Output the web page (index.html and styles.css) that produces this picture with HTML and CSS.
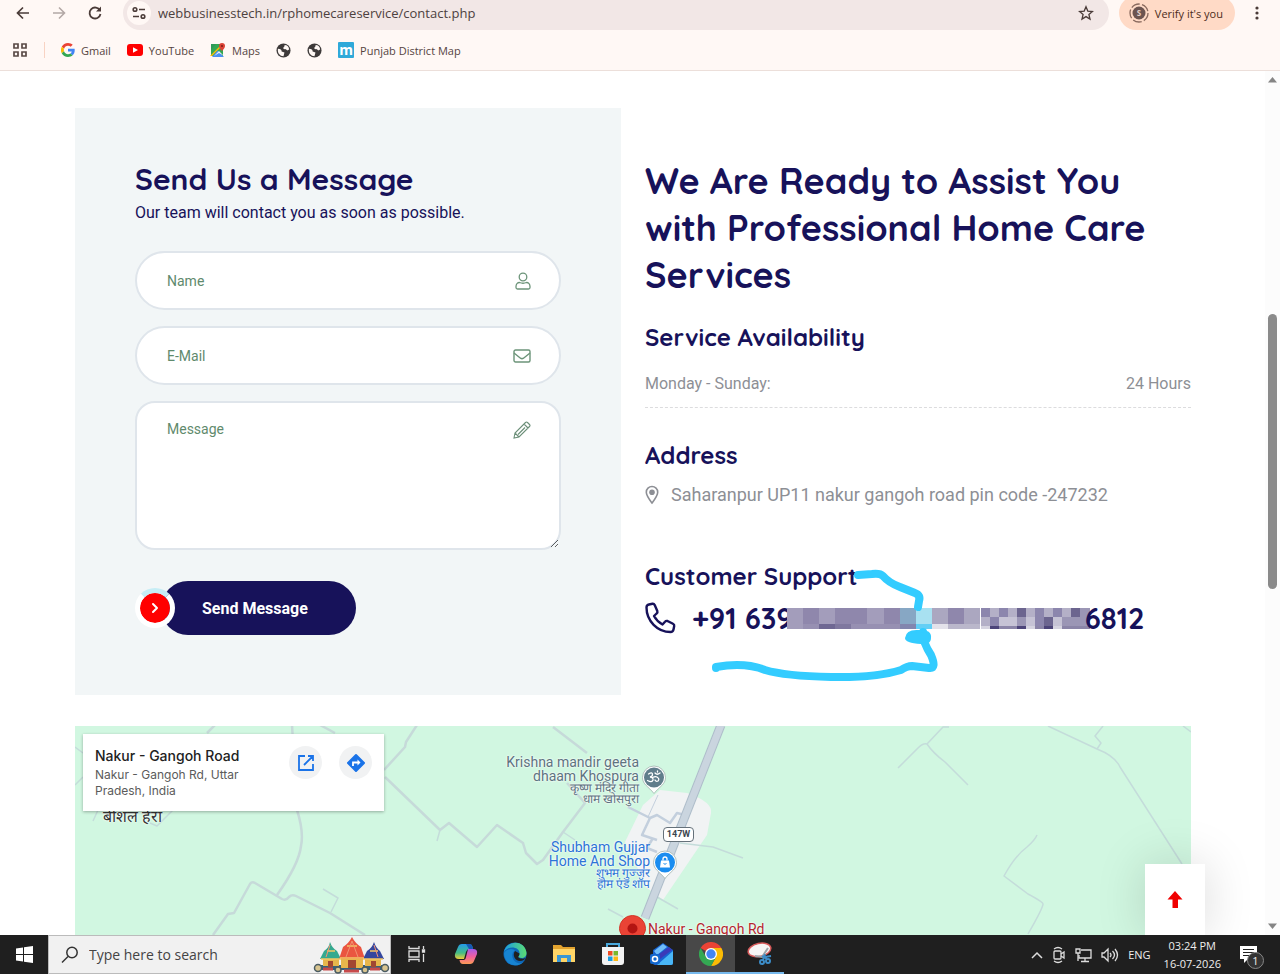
FILE: index.html
```html
<!DOCTYPE html>
<html lang="en">
<head>
  <meta charset="UTF-8" />
  <meta name="viewport" content="width=device-width, initial-scale=1" />
  <title>Contact</title>
  <link rel="stylesheet" href="styles.css">
</head>
<body>

<header class="browser">
  <div class="toolbar">
    <button class="tool" aria-label="Back"><svg width="16" height="16" viewBox="0 0 16 16"><path d="M14 8H3M8 2.500L2.500 8 8 13.500" fill="none" stroke="#4a3b38" stroke-width="1.700"/></svg></button>
    <button class="tool" aria-label="Forward"><svg width="16" height="16" viewBox="0 0 16 16"><path d="M2 8h11M8 2.500L13.500 8 8 13.500" fill="none" stroke="#b3a8a5" stroke-width="1.600"/></svg></button>
    <button class="tool" aria-label="Reload"><svg width="16" height="16" viewBox="0 0 16 16"><path d="M13 5.500A5.500 5.500 0 1 0 13.500 9" fill="none" stroke="#4a3b38" stroke-width="1.800"/><path d="M14 1.500v5H9z" fill="#4a3b38"/></svg></button>
    <div class="omnibox">
      <button class="site-info" aria-label="Site information"><svg width="16" height="16" viewBox="0 0 16 16" fill="none" stroke="#4a3b38" stroke-width="1.600"><circle cx="4" cy="4.500" r="1.800"/><path d="M8 4.500h6M2 11.500h6"/><circle cx="12" cy="11.500" r="1.800"/></svg></button>
      <input class="url" type="text" aria-label="Address bar" value="webbusinesstech.in/rphomecareservice/contact.php">
      <button class="tool star" aria-label="Bookmark"><svg width="16" height="16" viewBox="0 0 16 16"><path d="M8 1.800l1.800 4.300 4.600.4-3.500 3 1.100 4.600L8 11.600l-4 2.500 1.100-4.600-3.500-3 4.600-.4z" fill="none" stroke="#4a3b38" stroke-width="1.300"/></svg></button>
    </div>
    <button class="verify"><svg width="20" height="20" viewBox="0 0 20 20"><circle cx="10" cy="10" r="9" fill="none" stroke="#8a6a5e" stroke-width="1.300" stroke-dasharray="9 2.300"/><circle cx="10" cy="10" r="6.500" fill="#6c5450"/><text x="10" y="13" text-anchor="middle" class="avatar-letter">S</text></svg>Verify it's you</button>
    <button class="tool menu" aria-label="Menu"><svg width="16" height="16" viewBox="0 0 16 16" fill="#4a3b38"><circle cx="8" cy="3" r="1.600"/><circle cx="8" cy="8" r="1.600"/><circle cx="8" cy="13" r="1.600"/></svg></button>
  </div>
  <nav class="bookmarks">
    <button class="tool" aria-label="Apps"><svg width="16" height="16" viewBox="0 0 16 16" fill="none" stroke="#5a4a46" stroke-width="1.700"><path d="M2 2h4v4H2zM10 2h4v4h-4zM2 10h4v4H2zM10 10h4v4h-4z"/></svg></button>
    <span class="divider"></span>
    <a href="#"><svg width="14" height="14" viewBox="0 0 48 48"><path fill="#ea4335" d="M24 9.500c3.500 0 6.700 1.200 9.200 3.600l6.900-6.900C35.900 2.400 30.500 0 24 0 14.600 0 6.500 5.400 2.600 13.200l8 6.200C12.400 13.700 17.700 9.500 24 9.500z"/><path fill="#4285f4" d="M47 24.600c0-1.600-.2-3.100-.4-4.600H24v9h12.900c-.6 3-2.200 5.500-4.700 7.200l7.700 6C44.400 38 47 31.800 47 24.600z"/><path fill="#fbbc05" d="M10.500 28.600a14.500 14.500 0 0 1 0-9.200l-8-6.200a24 24 0 0 0 0 21.600z"/><path fill="#34a853" d="M24 48c6.500 0 11.900-2.100 15.900-5.800l-7.700-6c-2.200 1.500-4.900 2.300-8.200 2.300-6.300 0-11.600-4.200-13.500-9.900l-8 6.200C6.500 42.600 14.600 48 24 48z"/></svg>Gmail</a>
    <a href="#"><svg width="16" height="12" viewBox="0 0 16 12"><rect width="16" height="12" rx="3" fill="#f00"/><path d="M6 3.200v5.600L11 6z" fill="#fff"/></svg>YouTube</a>
    <a href="#"><svg width="16" height="16" viewBox="0 0 16 16"><path d="M1 2h12v12H1z" fill="#34a853"/><path d="M1 2h5L1 8z" fill="#2f9a58"/><path d="M13 3L2 14H0l12-12z" fill="#fbbc05"/><path d="M7.500 8.500L14 15H2z" fill="#4a90f0"/><path d="M4 14l5-5 5 5-5-3z" fill="#e6eefb"/><path d="M12 1a3 3 0 0 1 3 3c0 2-3 5-3 5S9 6 9 4a3 3 0 0 1 3-3z" fill="#db4437"/><circle cx="12" cy="4" r="1" fill="#7b1d16"/></svg>Maps</a>
    <a href="#" aria-label="Bookmark"><svg width="15" height="15" viewBox="0 0 16 16"><circle cx="8" cy="8" r="7.500" fill="#3e3a3a"/><path d="M2 6c3 0 4 1 4 3l3 1-1 4c-4 0-6-3-6-6zM9 2c1 2-2 2-1 4 2 1 3 0 4 2l2-1C14 4 12 2 9 2z" fill="#fff8f5"/></svg></a>
    <a href="#" aria-label="Bookmark"><svg width="15" height="15" viewBox="0 0 16 16"><circle cx="8" cy="8" r="7.500" fill="#3e3a3a"/><path d="M2 6c3 0 4 1 4 3l3 1-1 4c-4 0-6-3-6-6zM9 2c1 2-2 2-1 4 2 1 3 0 4 2l2-1C14 4 12 2 9 2z" fill="#fff8f5"/></svg></a>
    <a href="#"><span class="m-logo">m</span>Punjab District Map</a>
  </nav>
</header>

<div class="viewport">
  <main class="page">
    <div class="container">
      <div class="contact">
        <form class="message-form" autocomplete="off">
          <h2>Send Us a Message</h2>
          <p class="lead">Our team will contact you as soon as possible.</p>

          <div class="field">
            <input type="text" name="name" placeholder="Name" aria-label="Name">
            <svg class="field-icon" width="16" height="18" viewBox="0 0 16 18" fill="none" stroke="#6c9479" stroke-width="1.300"><circle cx="8" cy="5" r="3.800"/><path d="M4.500 10.500C2.500 10.500 1 12.500 1 14.500V15.500Q1 17 2.500 17H13.500Q15 17 15 15.500V14.500C15 12.500 13.500 10.500 11.500 10.500Q8 12 4.500 10.500z"/></svg>
          </div>
          <div class="field">
            <input type="email" name="email" placeholder="E-Mail" aria-label="E-Mail">
            <svg class="field-icon" width="18" height="14" viewBox="0 0 18 14" fill="none" stroke="#6c9479" stroke-width="1.400"><rect x="1" y="1" width="16" height="12" rx="1.500"/><path d="M1 4l6.500 5.200Q9 10.200 10.500 9.200L17 4"/></svg>
          </div>
          <div class="field">
            <textarea name="message" placeholder="Message" aria-label="Message"></textarea>
            <svg class="field-icon top" width="18" height="18" viewBox="0 0 18 18" fill="none" stroke="#6c8f79" stroke-width="1.100"><path d="M1 17l1-5L12.500 1.500Q13.500.5 14.500 1.500L16.500 3.500Q17.500 4.500 16.500 5.500L6 16zM11 3l4 4M2 12l4 4M12 6.500L5 13.500"/></svg>
          </div>

          <button type="submit" class="send">
            <span class="send-icon"><svg width="10" height="12" viewBox="0 0 10 12"><path d="M3 2l4 4-4 4" fill="none" stroke="#fff" stroke-width="2" stroke-linecap="round" stroke-linejoin="round"/></svg></span>
            Send Message
          </button>
        </form>

        <section class="info">
          <h1>We Are Ready to Assist You with Professional Home Care Services</h1>

          <h3>Service Availability</h3>
          <ul class="hours">
            <li><span>Monday - Sunday:</span><span>24 Hours</span></li>
          </ul>

          <h3>Address</h3>
          <p class="address">
            <svg width="14" height="20" viewBox="0 0 14 20"><path d="M7 1.500A5.700 5.700 0 0 1 12.700 7.200C12.700 10.500 10 14 7 18 4 14 1.300 10.500 1.300 7.200A5.700 5.700 0 0 1 7 1.500z" fill="none" stroke="#8d8f95" stroke-width="1.600"/><circle cx="7" cy="7.300" r="2.800" fill="#8d8f95"/></svg>
            Saharanpur UP11 nakur gangoh road pin code -247232
          </p>

          <div class="support">
            <h3>Customer Support</h3>
            <p class="phone">
              <svg width="32" height="32" viewBox="0 0 32 32" fill="none" stroke="#17125a" stroke-width="2.400" stroke-linejoin="round"><path d="M1.500 5.500Q1.500 3 4 2.500L7.500 1.800Q9 1.600 9.700 3L12.300 9Q12.800 10.500 11.600 11.500L9 14Q12 19.500 17.500 22.500L20 19.700Q21 18.500 22.500 19L28 21.800Q29.500 22.500 29.200 24L28.500 27.500Q28 30 25.500 30C12.500 30 1.500 19 1.500 5.500z"/></svg>
              <span>+91 639</span>
              <svg class="mosaic" width="303" height="21" viewBox="0 0 303 21" shape-rendering="crispEdges">
                <path fill="#a39dbb" d="M0 0h16v21H0zM32 0h16v16H32zM80 0h17v16H80z"/>
                <path fill="#8f87ac" d="M16 0h16v16H16zM48 0h32v16H48zM97 0h16v16H97zM161 0h16v16h-16z"/>
                <path fill="#9790b2" d="M16 16h16v5H16zM64 16h49v5H64z"/>
                <path fill="#6f6893" d="M32 16h16v5H32z"/>
                <path fill="#7f789f" d="M48 16h16v5H48z"/>
                <path fill="#87a7c4" d="M113 0h16v16h-16z"/>
                <path fill="#8286ae" d="M113 16h16v5h-16z"/>
                <path fill="#a8e1f1" d="M129 0h16v16h-16z"/>
                <path fill="#63cff5" d="M129 16h16v5h-16z"/>
                <path fill="#aba7c0" d="M145 0h16v16h-16zM177 0h16v16h-16z"/>
                <path fill="#e3e2ea" d="M145 16h16v5h-16z"/>
                <path fill="#bab7cb" d="M161 16h16v5h-16zM177 16h16v5h-16z"/>
                <path fill="#8c86ad" d="M194 0h9v9h-9zM212 0h9v9h-9zM248 0h9v18h-9zM266 0h9v9h-9zM203 9h9v9h-9z"/>
                <path fill="#b4b0c7" d="M203 0h9v9h-9zM221 0h9v9h-9zM239 0h9v9h-9zM257 0h9v9h-9zM275 0h9v9h-9zM194 9h9v9h-9z"/>
                <path fill="#6c658f" d="M230 0h9v9h-9zM284 0h9v9h-9zM257 9h9v9h-9z"/>
                <path fill="#c6c3d5" d="M212 9h18v9h-18zM239 9h9v9h-9zM266 9h9v9h-9z"/>
                <path fill="#9b96b5" d="M230 9h9v9h-9zM275 9h28v9h-28zM293 0h10v9h-10z"/>
                <path fill="#4c4479" d="M203 18h9v3h-9zM230 18h9v3h-9zM257 18h9v3h-9z"/>
                <path fill="#8b85a8" d="M212 18h18v3h-18zM248 18h9v3h-9zM275 18h28v3h-28z"/>
                <path fill="#d6d4e0" d="M194 18h9v3h-9zM239 18h9v3h-9zM266 18h9v3h-9z"/>
              </svg>
              <span>6812</span>
            </p>
            <!-- hand-drawn marker line -->
            <svg class="marker" width="300" height="120" viewBox="0 0 300 120" fill="none" stroke="#33ccff" stroke-width="8" stroke-linecap="round" stroke-linejoin="round">
              <path d="M213 14L227 13Q235 12 238 15Q244 22 255 26L270 32Q276 34 274 40L273 46"/>
              <path d="M278 71Q277 80 286 94Q292 108 284 107L267 105Q262 105 256 109Q230 117 186 116Q140 115 120 109Q100 101 71 106L71 107"/>
              <path d="M261 77q1-8 13-7 12-1 11 7 0 6-9 5-15-1-15-5z" fill="#33ccff" stroke-width="2"/>
            </svg>
          </div>
        </section>
      </div>

      <div class="map">
        <svg class="map-canvas" viewBox="0 0 1116 209" preserveAspectRatio="xMidYMin slice" fill="none" stroke-linejoin="round">
          <path d="M585 64L612 67Q638 76 636 87L632 109 588 174 572 162 550 116 568 79z" fill="#f1f3f4"/>
          <g stroke="#c6dad9" stroke-width="2.500">
            <path d="M217-1L222 84Q229 106 226 120 224 138 202 169"/>
            <path d="M138 209L153 188 159 187 175 158Q177 155 180 157L207 173Q211 175 214 171 217 168 221 170L255 187 290 209"/>
            <path d="M132 7l8-8M245-1l15 8M309 44l21-23 1-5 11-17M310 51l55 53 9-7 28 24 20-22 26 18 3 10 11 11 6-4 20-28 22-29-18-20M478 1l34 26"/>
          </g>
          <g stroke="#c3cfdd" stroke-width="2.500"><path d="M553 81l22 11 7-3 13 8 7-10 8 2M575 92l-8 17 15 5M578 112l-6 10 10 4"/><path d="M583 69l-10 22" stroke-width="1"/></g>
          <g stroke="#c4dcda" stroke-width="1.500">
            <path d="M248 163l15 9-7 14M0 21l8 6M0 59l8-8M23 84l-5 11M75 97l7 3 16-16M362 115l3-11M488 106l12 8"/>
            <path d="M605 117l33 4 30 11M582 171l21 12M533 183l15 8"/>
            <path d="M823 42l20-20q5-5 9-4l16-17h6M852 18q6 9 18 18l23 23"/>
            <path d="M973 0l49 23q18 7 23 18l62 97M1028 0l-8 10 6 7-4 6M1108 0l8 6M962 109q-2 5-10 12-12 9-23 29l24 18q15 8 15 10 0 4-15 30"/>
          </g>
          <path d="M646-1L570 192" stroke="#aebdca" stroke-width="9"/>
          <path d="M646-1L570 192" stroke="#cad5df" stroke-width="7"/>
        </svg>
        <span class="place village">बीशल हेरा</span>
        <div class="place temple">Krishna mandir geeta<br>dhaam Khospura<small>कृष्ण मंदिर गीता<br>धाम खोसपुरा</small></div>
        <svg class="pin temple-pin" width="26" height="30" viewBox="0 0 26 30"><path d="M13 1a11.500 11.500 0 0 1 11.500 11.500c0 7-6 9-11.500 16-5.500-7-11.500-9-11.500-16A11.500 11.500 0 0 1 13 1z" fill="#fff" stroke="#9fb3ad" stroke-width=".8"/><circle cx="13" cy="12.500" r="10" fill="#607d8b"/><path d="M7.500 9q4-2.500 4 .5 0 2-2.500 2.500 3.500.5 3 3-1 3-5.500.5M11.500 12.500q3-1.500 4.500-.5 3 2 1 4-2 1-3-1M14 8q2 2.500 5 0M16.500 6v1" fill="none" stroke="#fff" stroke-width="1.300" stroke-linecap="round"/></svg>
        <span class="road-shield">147W</span>
        <div class="place shop">Shubham Gujjar<br>Home And Shop<small>शुभम गुज्जर<br>होम एंड शॉप</small></div>
        <svg class="pin shop-pin" width="26" height="30" viewBox="0 0 26 30"><path d="M13 1a11.500 11.500 0 0 1 11.500 11.500c0 7-6 9-11.500 16-5.500-7-11.500-9-11.500-16A11.500 11.500 0 0 1 13 1z" fill="#fff" stroke="#9fb3ad" stroke-width=".8"/><circle cx="13" cy="12.500" r="10" fill="#1a8df0"/><path d="M9 10.500h8l1 7H8z" fill="#fff"/><path d="M11 10.500V9a2 2 0 0 1 4 0v1.500" fill="none" stroke="#fff" stroke-width="1.300"/><path d="M11.500 13.500q1.500 1.500 3 0" fill="none" stroke="#1a8df0"/></svg>
        <svg class="pin main-pin" width="27" height="36" viewBox="0 0 27 36"><path d="M13.500.5a13 13 0 0 1 13 13c0 8-9 11-13 22-4-11-13-14-13-22a13 13 0 0 1 13-13z" fill="#ea4335" stroke="#d33426"/><circle cx="13.500" cy="13.500" r="5" fill="#b31412"/></svg>
        <span class="place main-label">Nakur - Gangoh Rd</span>

        <div class="place-card">
          <div>
            <strong>Nakur - Gangoh Road</strong>
            <p>Nakur - Gangoh Rd, Uttar Pradesh, India</p>
          </div>
          <a class="round" href="#" aria-label="Open in Maps"><svg width="18" height="18" viewBox="0 0 18 18" fill="none" stroke="#1a73e8" stroke-width="1.800"><path d="M8 2H2v14h14v-6M11 2h5v5M16 2L7 11"/></svg></a>
          <a class="round" href="#" aria-label="Directions"><svg width="20" height="20" viewBox="0 0 20 20"><path d="M10 2L18 10 10 18 2 10z" fill="#1a73e8" stroke="#1a73e8" stroke-width="2" stroke-linejoin="round"/><path d="M7 13V9.500h5" fill="none" stroke="#fff" stroke-width="1.800"/><path d="M11.500 6.500l3 3-3 3z" fill="#fff"/></svg></a>
        </div>
      </div>
    </div>
    <button class="to-top" aria-label="Back to top"><svg width="16" height="18" viewBox="0 0 16 18"><path d="M8 0l7.500 8.500H11V17H5.500V8.500H.5z" fill="#f00000"/></svg></button>
  </main>
  <div class="scrollbar">
    <svg width="9" height="6" viewBox="0 0 9 6"><path d="M4.500 0L9 5.500H0z" fill="#858585"/></svg>
    <div class="track"><div class="thumb"></div></div>
    <svg width="9" height="6" viewBox="0 0 9 6"><path d="M0 .5h9L4.500 6z" fill="#858585"/></svg>
  </div>
</div>

<footer class="taskbar">
  <button class="start" aria-label="Start"><svg width="17" height="17" viewBox="0 0 17 17" fill="#fff"><path d="M0 2.500L7 1.500V8H0zM8 1.300L17 0v8H8zM0 9h7v6.500L0 14.500zM8 9h9v8l-9-1.300z"/></svg></button>
  <div class="search">
    <svg width="18" height="18" viewBox="0 0 18 18" fill="none" stroke="#333" stroke-width="1.500"><circle cx="11" cy="6.500" r="5.200"/><path d="M7 10.500L1 16.500"/></svg>
    <input type="text" aria-label="Search" placeholder="Type here to search">
    <svg width="77" height="38" viewBox="0 0 77 38">
      <path d="M3 29h71v5H3z" fill="#35617c"/>
      <path d="M10 21h16v9H10zM52 21h16v9H52zM28 20h22v12H28z" fill="#e7b64c"/>
      <path d="M17 6Q19 12 24 15L28 23H7l4-8q5-3 6-9z" fill="#35a98f"/>
      <path d="M39 1q3 6 9 10l4 12H26l4-12q6-4 9-10z" fill="#ea5540"/>
      <path d="M61 6q2 6 6 9l4 8H50l4-8q5-3 7-9z" fill="#35479e"/>
      <path d="M14 15h8M34 10h10M57 15h8M8 23h20M27 22h24M50 23h20" stroke="#f3c765" stroke-width="1.600"/>
      <path d="M39 5L33 21M39 5l6 16M17 9l-4 12M61 9l4 12" stroke="#f19372"/>
      <path d="M15 25h5v6h-5zM35 24h8v8h-8zM58 25h5v6h-5z" fill="#a14632"/>
      <g fill="#d8c48f" stroke="#4b5c62" stroke-width="1.500"><circle cx="5" cy="32" r="3.500"/><circle cx="25" cy="34" r="3"/><circle cx="52" cy="34" r="3"/><circle cx="72" cy="32" r="3.500"/></g>
      <path d="M10 33h10M31 35h15M57 33h10" stroke="#c74a4b" stroke-width="3"/>
    </svg>
  </div>
  <div class="apps">
    <button aria-label="Task view"><svg width="18" height="18" viewBox="0 0 18 18" fill="none" stroke="#ddd" stroke-width="1.300"><path d="M1 1v2.500h10V1M1 17v-2.500h10V17M1 6h10v6H1zM15.500 1v3M15.500 9v8"/><path d="M14.500 5h2v2h-2z" fill="#fff"/></svg></button>
    <button aria-label="Copilot"><svg width="24" height="22" viewBox="0 0 24 22"><defs><linearGradient id="cop1" x2="0" y2="1"><stop stop-color="#239ae8"/><stop offset=".6" stop-color="#45bd83"/><stop offset="1" stop-color="#f1ce38"/></linearGradient><linearGradient id="cop2" x2="0" y2="1"><stop stop-color="#a65be8"/><stop offset=".5" stop-color="#ef5e9f"/><stop offset="1" stop-color="#fb9b55"/></linearGradient></defs><path d="M8 1h7q3 0 3.500 3L19 6h-4q-2 0-3 3l-2 7H5q-5 0-4-5L4 4q1-3 4-3z" fill="url(#cop1)"/><path d="M14 6h5q5 0 4 5l-3 7q-1 3-4 3H9q-3 0-3.500-4h4q2 0 2.500-3z" fill="url(#cop2)"/><path d="M12 1h4q2 0 3 5h-4z" fill="#1658b5"/></svg></button>
    <button aria-label="Edge"><svg width="24" height="24" viewBox="0 0 24 24"><defs><linearGradient id="edge"><stop stop-color="#1b9de2"/><stop offset="1" stop-color="#5bdc72"/></linearGradient></defs><circle cx="12" cy="12" r="11.500" fill="#0d67b8"/><path d="M1 10C3-2 22-3 23.500 11c0 5-5 6-8 4-1-1 1-1 1-4 0-6-11-8-15.500-1z" fill="url(#edge)"/><path d="M1 11c3-5 10-5 11-2-4 1-4 10 3 12 3 1 6-1 7-3-5 8-20 8-21-7z" fill="#1784d2"/><path d="M12 9c-3 4 0 10 5 10 3 0 5-2 5.500-3-2 1-5 1-7-.5-1-1 1-1 1-4z" fill="#202020"/></svg></button>
    <button aria-label="File Explorer"><svg width="22" height="19" viewBox="0 0 22 19"><path d="M0 1h8l2 2h12v15H0z" fill="#e3a32f"/><path d="M0 5h22v13H0z" fill="#ffd567"/><path d="M4 18v-7h14v7h-4v-4H8v4z" fill="#3997d5"/></svg></button>
    <button aria-label="Store"><svg width="24" height="24" viewBox="0 0 24 24"><path d="M6 6V2h12v4" fill="none" stroke="#4aa9dd" stroke-width="2"/><path d="M1 5h22v15q0 3-3 3H4q-3 0-3-3z" fill="#f3f3f3"/><path d="M7 9h4.500v4.500H7z" fill="#f04c23"/><path d="M12.500 9H17v4.500h-4.500z" fill="#79b72b"/><path d="M7 14.500h4.500V19H7z" fill="#1a9de0"/><path d="M12.500 14.500H17V19h-4.500z" fill="#fdb813"/></svg></button>
    <button aria-label="Outlook"><svg width="24" height="24" viewBox="0 0 24 24"><path d="M3 8L13 1l10 7v13q0 2-2 2H5q-2 0-2-2z" fill="#1762cf"/><path d="M4 9l9-7 4 3L7 13z" fill="#6fbdf9"/><path d="M23 9v12q0 2-2 2H7z" fill="#49b6f6"/><path d="M8 13l11-8 3 3-12 9z" fill="#3b38b8"/><rect y="12" width="10" height="10" rx="2" fill="#1368ce"/><circle cx="5" cy="17" r="2.500" fill="none" stroke="#fff" stroke-width="1.600"/></svg></button>
    <button class="running active" aria-label="Chrome"><svg width="24" height="24" viewBox="0 0 24 24"><path d="M12 12L1.600 6A12 12 0 0 1 22.400 6z" fill="#ea4335"/><path d="M12 12V6h10.400A12 12 0 0 1 12 24l5-9z" fill="#fbbc05"/><path d="M12 12l5 3-5 9A12 12 0 0 1 1.600 6L7 15z" fill="#34a853"/><circle cx="12" cy="12" r="6" fill="#fff"/><circle cx="12" cy="12" r="4.700" fill="#4285f4"/></svg></button>
    <button class="running" aria-label="Snipping Tool"><svg width="26" height="24" viewBox="0 0 26 24"><ellipse cx="12.500" cy="8" rx="11.500" ry="6.500" transform="rotate(-12 12 8)" fill="#f5f5f5" stroke="#d65b5b" stroke-width="1.500"/><path d="M8 14l7 1 6-9" fill="none" stroke="#9aa2a8" stroke-width="2"/><g fill="none" stroke="#3c8cc8" stroke-width="2"><circle cx="15" cy="20" r="2"/><circle cx="21" cy="19" r="2"/><path d="M16 18l2-6M20 17l-5-3M18 15l6-1"/></g></svg></button>
  </div>
  <div class="tray">
    <svg width="12" height="8" viewBox="0 0 12 8"><path d="M1 7l5-5 5 5" fill="none" stroke="#ddd" stroke-width="1.500"/></svg>
    <svg width="14" height="18" viewBox="0 0 14 18" fill="none" stroke="#ddd" stroke-width="1.300"><rect x="2" y="5" width="7" height="8" rx="1"/><path d="M9 8l3-2v6l-3-2M2 3q4-3 8 0M2 15q4 3 8 0"/></svg>
    <svg width="17" height="16" viewBox="0 0 17 16" fill="none" stroke="#ddd" stroke-width="1.300"><path d="M6 3h10v8H4V8M10 11v3M6 14.500h8"/><path d="M1 2h4v4H1zM3 6v8"/></svg>
    <svg width="18" height="16" viewBox="0 0 18 16" fill="none" stroke="#ddd" stroke-width="1.300"><path d="M1 6h2l4-4v12l-4-4H1zM9 6q2 2 0 4M11.500 4q4 4 0 8M14 2q5 6 0 12"/></svg>
    <span>ENG</span>
    <span class="clock">03:24 PM<br>16-07-2026</span>
    <button class="notify" aria-label="1 notification"><svg width="18" height="17" viewBox="0 0 18 17"><path d="M0 0h17v13H8l-4 4v-4H0z" fill="#fff"/><path d="M3 3.500h11M3 6.500h11M3 9.500h8" stroke="#202020" stroke-width="1.200"/></svg><span class="badge">1</span></button>
  </div>
</footer>

</body>
</html>
```
FILE: styles.css
```css
* {
  box-sizing: border-box;
}
body {
  margin: 0;
  height: 100vh;
  display: flex;
  flex-direction: column;
  overflow: hidden;
  font-family: Roboto, "Liberation Sans", sans-serif;
  color: #17125a;
  background: #fff;
}
h1, h2, h3, p, ul {
  margin: 0;
  padding: 0;
}
h1, h2, h3, .phone {
  font-family: Quicksand, Lato, sans-serif;
  font-weight: 700;
}
button {
  border: none;
  background: none;
  padding: 0;
  font: inherit;
  color: inherit;
  cursor: pointer;
}
a {
  color: inherit;
  text-decoration: none;
}
svg {
  display: block;
  flex: none;
}

/* browser bars */
.browser {
  flex: none;
  height: 71px;
  background: #fff8f5;
  border-bottom: 1px solid #ecdfda;
  font-family: "Segoe UI", "Open Sans", sans-serif;
  font-size: 11px;
  color: #55443f;
}
.toolbar {
  display: flex;
  align-items: center;
  height: 34px;
  margin-top: -4px;
  padding: 0 15px;
}
.tool {
  width: 16px;
  height: 16px;
}
.toolbar > .tool {
  margin-right: 20px;
}
.omnibox {
  flex: 1;
  display: flex;
  align-items: center;
  height: 34px;
  padding: 0 15px 0 4px;
  background: #f2e7e6;
  border-radius: 17px;
}
.site-info {
  display: grid;
  place-items: center;
  width: 24px;
  height: 24px;
  border-radius: 50%;
  background: #fff8f5;
}
.url {
  flex: 1;
  margin-left: 7px;
  padding: 0;
  border: none;
  outline: none;
  background: none;
  font: 13px "Segoe UI", "Open Sans", sans-serif;
  color: #4d4140;
}
.verify {
  display: flex;
  align-items: center;
  gap: 6px;
  height: 34px;
  margin: 0 14px 0 10px;
  padding: 0 12px 0 10px;
  border-radius: 17px;
  background: #ffdac6;
  color: #4d2c20;
}
.avatar-letter {
  font: bold 8px "Open Sans", sans-serif;
  fill: #e4cfc7;
}
.toolbar > .menu {
  margin-right: 0;
}
.bookmarks {
  display: flex;
  align-items: center;
  gap: 16px;
  height: 40px;
  padding: 0 12px;
}
.bookmarks a {
  display: flex;
  align-items: center;
  gap: 6px;
}
.divider {
  width: 1px;
  height: 16px;
  background: #f8d3c3;
}
.m-logo {
  width: 16px;
  height: 16px;
  border-radius: 1px;
  background: #2fa9d9;
  color: #fff;
  font-weight: 700;
  font-size: 14px;
  line-height: 15px;
  text-align: center;
}

/* page */
.viewport {
  flex: 1;
  min-height: 0;
  display: flex;
}
.page {
  flex: 1;
  position: relative;
  overflow: hidden;
}
.container {
  height: 100%;
  margin: 0 74px 0 75px;
  padding-top: 37px;
  display: flex;
  flex-direction: column;
}
.contact {
  display: grid;
  grid-template-columns: 1fr 1fr;
  gap: 24px;
}
.message-form {
  padding: 51px 60px 60px;
  background: #f2f6f7;
}
h2 {
  font-size: 30px;
  line-height: 40px;
}
.lead {
  margin: 2px 0 26px;
  font-size: 16px;
  line-height: 24px;
}
.field {
  position: relative;
  margin-bottom: 16px;
}
.field input,
.field textarea {
  display: block;
  width: 100%;
  height: 59px;
  padding: 0 30px;
  border: 2px solid #dfe5eb;
  border-radius: 30px;
  background: #fff;
  font: 14px Roboto, sans-serif;
  color: #17125a;
}
.field textarea {
  height: 149px;
  padding-top: 18px;
  border-radius: 20px;
  resize: vertical;
}
.field ::placeholder {
  color: #5f8a6d;
}
.field-icon {
  position: absolute;
  right: 30px;
  top: 50%;
  transform: translateY(-50%);
}
.field-icon.top {
  top: 29px;
}
.send {
  position: relative;
  height: 54px;
  margin: 15px 0 0 26px;
  padding: 0 48px 0 41px;
  border-radius: 27px;
  background: #17125a;
  color: #fff;
  font-size: 16px;
  font-weight: 700;
}
.send-icon {
  position: absolute;
  left: -26px;
  top: 7px;
  display: grid;
  place-items: center;
  width: 40px;
  height: 40px;
  border: 5px solid #fff;
  border-top-color: #c6edf5;
  border-radius: 50%;
  background: #f00 padding-box;
}

.info {
  padding-top: 49px;
}
h1 {
  font-size: 36px;
  line-height: 47px;
}
h3 {
  font-size: 24px;
  line-height: 30px;
}
h1 + h3 {
  margin-top: 24px;
}
.hours {
  list-style: none;
  margin: 16px 0 32px;
  color: #8d8f95;
  font-size: 16px;
  line-height: 32px;
}
.hours li {
  display: flex;
  justify-content: space-between;
  padding-bottom: 7px;
  border-bottom: 1px dashed #dcdcde;
}
.address {
  display: flex;
  align-items: center;
  gap: 12px;
  margin: 12px 0 53px;
  color: #8d8f95;
  font-size: 18px;
  line-height: 26px;
}
.support {
  position: relative;
}
.phone {
  display: flex;
  align-items: center;
  margin-top: 7px;
  font-size: 29px;
  line-height: 40px;
}
.phone span:first-of-type {
  margin-left: 15px;
}
.mosaic {
  margin: 0 -5px 0 -6px;
}
.marker {
  position: absolute;
  left: 0;
  top: 0;
}

/* map */
.map {
  position: relative;
  flex: 1;
  margin-top: 31px;
  overflow: hidden;
  background: #d1f7e1;
}
.map-canvas {
  width: 100%;
  height: 100%;
}
.place,
.pin,
.road-shield {
  position: absolute;
}
.place {
  color: #5e7380;
  font-size: 14px;
  line-height: 14px;
  text-align: right;
  white-space: nowrap;
  text-shadow: 0 0 2px #fff, 0 0 2px #fff;
}
.place small {
  display: block;
  font-size: 12px;
  line-height: 11px;
}
.village {
  left: 28px;
  top: 84px;
  color: #333;
  font-size: 16px;
}
.temple {
  right: 552px;
  top: 29px;
}
.shop {
  right: 541px;
  top: 114px;
  color: #2c74d6;
}
.temple-pin {
  left: 566px;
  top: 39px;
}
.shop-pin {
  left: 577px;
  top: 124px;
}
.main-pin {
  left: 544px;
  top: 189px;
}
.main-label {
  left: 573px;
  top: 196px;
  color: #b3262e;
}
.road-shield {
  left: 588px;
  top: 101px;
  width: 31px;
  height: 15px;
  border: 1px solid #65717a;
  border-radius: 4px;
  background: #fff;
  color: #3c4650;
  font-size: 9px;
  font-weight: 700;
  line-height: 13px;
  text-align: center;
}
.place-card {
  position: absolute;
  left: 8px;
  top: 8px;
  display: flex;
  align-items: flex-start;
  gap: 17px;
  width: 301px;
  padding: 12px;
  background: #fff;
  box-shadow: 0 1px 3px rgb(0 0 0 / 0.3);
  color: #5b5b5b;
  font-family: "Google Sans", Inter, sans-serif;
  font-size: 12px;
  line-height: 16px;
}
.place-card > div {
  flex: 1;
}
.place-card strong {
  display: block;
  margin-bottom: 1px;
  color: #222;
  font-size: 14px;
  font-weight: 500;
  line-height: 20px;
  white-space: nowrap;
}
.round {
  display: grid;
  place-items: center;
  width: 33px;
  height: 33px;
  border-radius: 50%;
  background: #f1f2f3;
}
.to-top {
  position: absolute;
  right: 60px;
  bottom: 0;
  display: grid;
  place-items: center;
  width: 60px;
  height: 71px;
  background: #fff;
  box-shadow: 0 0 50px rgb(0 0 0 / 0.15);
}
.scrollbar {
  width: 15px;
  flex: none;
  display: flex;
  flex-direction: column;
  align-items: center;
  padding: 6px 0;
  background: #fcfcfc;
}
.track {
  flex: 1;
  padding: 231px 0 0;
}
.thumb {
  width: 9px;
  height: 275px;
  border-radius: 5px;
  background: #8a8a8a;
}

/* taskbar */
.taskbar {
  flex: none;
  display: flex;
  height: 39px;
  background: #1f1f1f;
  color: #eee;
  font-family: "Segoe UI", "Open Sans", sans-serif;
  font-size: 11px;
}
.start {
  display: grid;
  place-items: center;
  width: 48px;
}
.search {
  display: flex;
  align-items: center;
  gap: 10px;
  width: 343px;
  padding-left: 12px;
  background: #f1f1f1;
  border: 1px solid #bbb;
}
.search input {
  flex: 1;
  min-width: 0;
  border: none;
  outline: none;
  padding: 0;
  background: none;
  font: 14px "Segoe UI", "Open Sans", sans-serif;
}
.search input::placeholder {
  color: #444;
}
.apps {
  display: flex;
  margin-left: 1px;
}
.apps button {
  display: grid;
  place-items: center;
  width: 49px;
  border-bottom: 2px solid transparent;
}
.apps .running {
  border-bottom-color: #76b9ed;
}
.apps .active {
  background: #484848;
}
.tray {
  display: flex;
  align-items: center;
  gap: 9px;
  margin-left: auto;
  padding-right: 22px;
}
.clock {
  line-height: 18px;
  text-align: center;
  margin: 0 10px 0 4px;
}
.notify {
  position: relative;
}
.badge {
  position: absolute;
  left: 7px;
  top: 6px;
  width: 17px;
  height: 17px;
  border: 1px solid #888;
  border-radius: 50%;
  background: #333;
  font-size: 11px;
  line-height: 15px;
}
```
